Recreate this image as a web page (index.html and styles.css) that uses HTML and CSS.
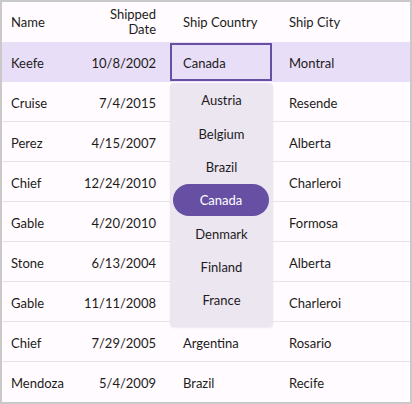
FILE: index.html
```html
<!DOCTYPE html>
<html>
<head>
<meta charset="utf-8">
<link rel="stylesheet" href="styles.css">
</head>
<body>
<div class="frame">
  <div class="grid">
    <div class="row head">
      <div class="cell c1">Name</div>
      <div class="cell c2">Shipped<br>Date</div>
      <div class="cell c3">Ship Country</div>
      <div class="cell c4">Ship City</div>
    </div>
    <div class="row sel">
      <div class="cell c1">Keefe</div>
      <div class="cell c2">10/8/2002</div>
      <div class="cell c3 editcell"><div class="editor">Canada</div></div>
      <div class="cell c4">Montral</div>
    </div>
    <div class="row">
      <div class="cell c1">Cruise</div>
      <div class="cell c2">7/4/2015</div>
      <div class="cell c3"></div>
      <div class="cell c4">Resende</div>
    </div>
    <div class="row">
      <div class="cell c1">Perez</div>
      <div class="cell c2">4/15/2007</div>
      <div class="cell c3"></div>
      <div class="cell c4">Alberta</div>
    </div>
    <div class="row">
      <div class="cell c1">Chief</div>
      <div class="cell c2">12/24/2010</div>
      <div class="cell c3"></div>
      <div class="cell c4">Charleroi</div>
    </div>
    <div class="row">
      <div class="cell c1">Gable</div>
      <div class="cell c2">4/20/2010</div>
      <div class="cell c3"></div>
      <div class="cell c4">Formosa</div>
    </div>
    <div class="row">
      <div class="cell c1">Stone</div>
      <div class="cell c2">6/13/2004</div>
      <div class="cell c3"></div>
      <div class="cell c4">Alberta</div>
    </div>
    <div class="row">
      <div class="cell c1">Gable</div>
      <div class="cell c2">11/11/2008</div>
      <div class="cell c3"></div>
      <div class="cell c4">Charleroi</div>
    </div>
    <div class="row">
      <div class="cell c1">Chief</div>
      <div class="cell c2">7/29/2005</div>
      <div class="cell c3">Argentina</div>
      <div class="cell c4">Rosario</div>
    </div>
    <div class="row last">
      <div class="cell c1">Mendoza</div>
      <div class="cell c2">5/4/2009</div>
      <div class="cell c3">Brazil</div>
      <div class="cell c4">Recife</div>
    </div>
  </div>
  <div class="dropdown">
    <div class="item">Austria</div>
    <div class="item">Belgium</div>
    <div class="item">Brazil</div>
    <div class="item active">Canada</div>
    <div class="item">Denmark</div>
    <div class="item">Finland</div>
    <div class="item">France</div>
  </div>
</div>
</body>
</html>
```
FILE: styles.css
```css
html, body {
  margin: 0;
  padding: 0;
  background: #c9c9c9;
}
.frame {
  position: relative;
  box-sizing: border-box;
  width: 412px;
  height: 404px;
  border: 2px solid #c9c9c9;
  background: #fffbfe;
  font-family: "Lato", "Noto Sans", sans-serif;
  font-size: 13px;
  color: #1d1b20;
  overflow: hidden;
}
.grid {
  display: flex;
  flex-direction: column;
}
.row {
  display: grid;
  grid-template-columns: 84px 84px 103px 137px;
  height: 40px;
  box-sizing: border-box;
  border-bottom: 1px solid #e8e2ec;
}
.row.head {
  border-bottom: none;
}
.row.head .cell {
  padding-top: 0;
  line-height: 15px;
}
.row.sel {
  background: #e8def8;
  border-bottom: none;
}
.row.last {
  border-bottom: none;
}
.cell {
  display: flex;
  align-items: center;
  white-space: nowrap;
  line-height: 16px;
  padding-top: 2px;
}
.c1 { padding-left: 9px; }
.c2 { justify-content: flex-end; text-align: right; padding-right: 14px; }
.c3 { padding-left: 13px; }
.c4 { padding-left: 16px; }
.editcell {
  padding: 1px 0 1px 0;
  align-items: stretch;
}
.editor {
  flex: 1;
  box-sizing: border-box;
  border: 2px solid #6750a4;
  display: flex;
  align-items: center;
  padding-left: 11px;
  padding-top: 2px;
  margin-right: 1px;
}
.dropdown {
  position: absolute;
  left: 168px;
  top: 81px;
  width: 103px;
  height: 244px;
  box-sizing: border-box;
  background: #ece6f1;
  border-radius: 4px;
  box-shadow: 0 1px 2px rgba(0,0,0,0.08);
  padding: 0.33px 0 0 0;
  display: flex;
  flex-direction: column;
}
.item {
  height: 33.33px;
  display: flex;
  align-items: center;
  justify-content: center;
  padding-top: 1px;
  box-sizing: border-box;
  color: #1d1b20;
}
.item.active {
  background: #6750a4;
  color: #ffffff;
  border-radius: 16px;
  margin: 0 4px 0 3px;
  height: 32px;
  margin-top: 0.33px;
  margin-bottom: 1px;
}
```
